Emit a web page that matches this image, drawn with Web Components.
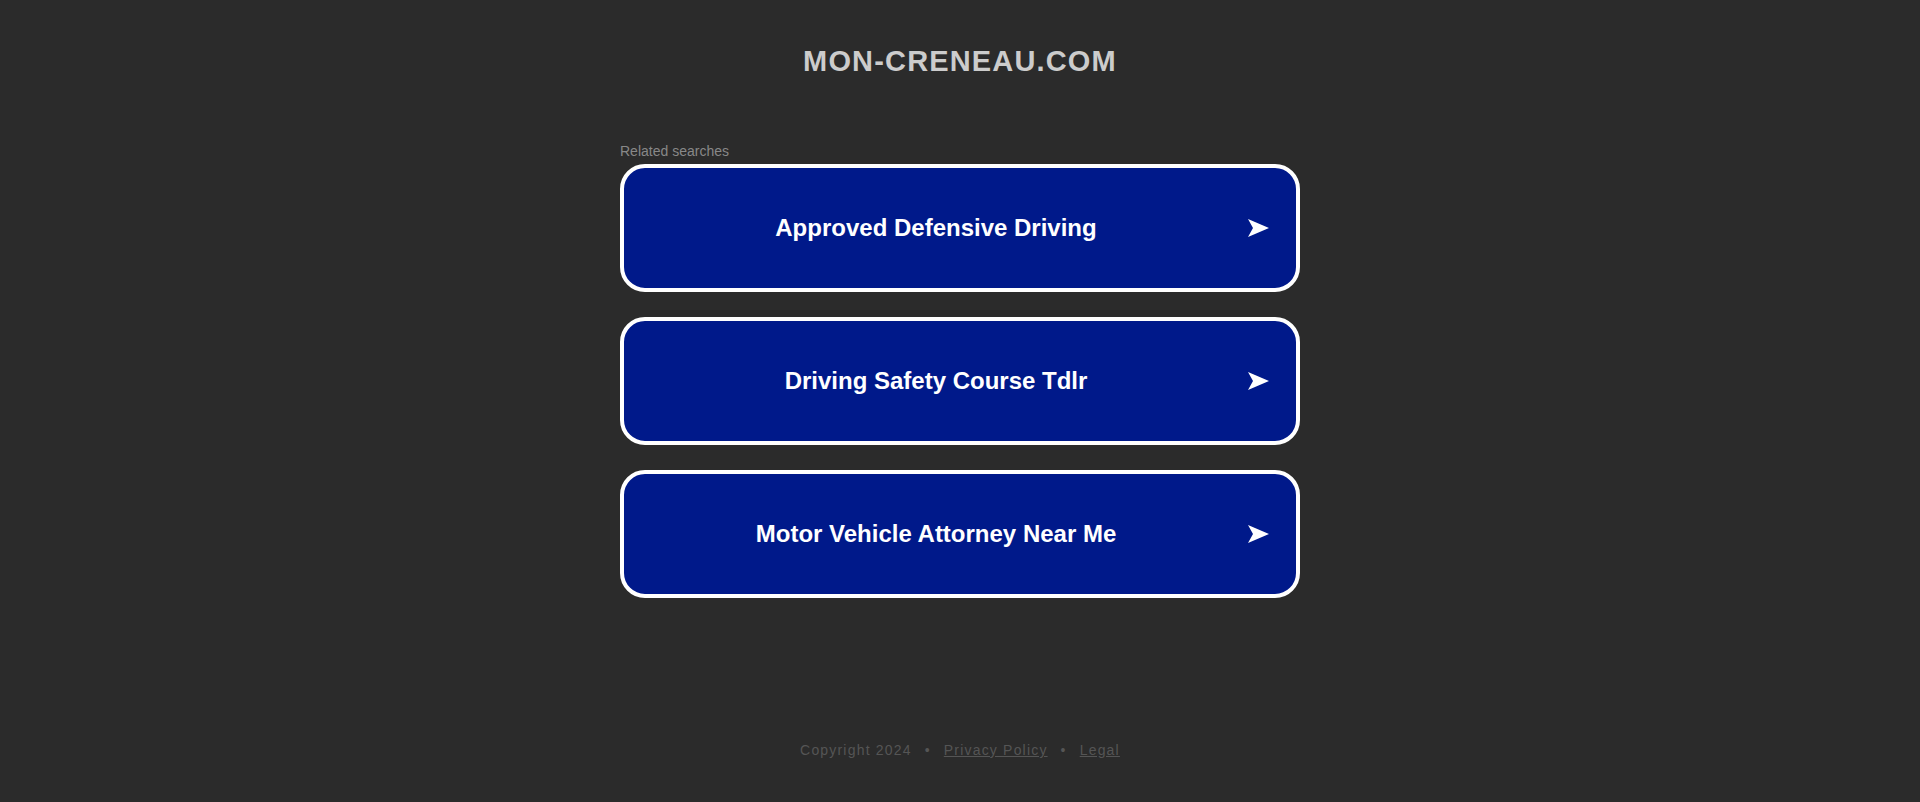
<!DOCTYPE html>
<html lang="en">
<head>
<meta charset="utf-8">
<title>mon-creneau.com</title>
<style>
body { margin: 0; background: #2b2b2b; font-family: Arial, "Liberation Sans", sans-serif; }
</style>
</head>
<body>
<parked-page>
  <site-title slot="header">MON-CRENEAU.COM</site-title>
  <related-searches label="Related searches">
    <search-link>Approved Defensive Driving</search-link>
    <search-link>Driving Safety Course Tdlr</search-link>
    <search-link>Motor Vehicle Attorney Near Me</search-link>
  </related-searches>
  <site-footer slot="footer"></site-footer>
</parked-page>
<script>
const define = (name, html) => customElements.define(name, class extends HTMLElement {
  constructor() {
    super();
    const t = document.createElement('template');
    t.innerHTML = html;
    this.attachShadow({ mode: 'open' }).append(t.content.cloneNode(true));
    const label = this.shadowRoot.querySelector('[data-label]');
    if (label) label.textContent = this.getAttribute('label');
  }
});

define('parked-page', `
<style>
  :host { display: flex; flex-direction: column; box-sizing: border-box; min-height: 100vh; padding: 40px 16px; }
  main { width: 100%; max-width: 680px; margin: 60px auto 0; }
  footer { margin-top: auto; }
</style>
<header><slot name="header"></slot></header>
<main><slot></slot></main>
<footer><slot name="footer"></slot></footer>`);

define('site-title', `
<style>
  :host { display: block; text-align: center; }
  h1 { margin: 0; font-size: 29px; line-height: 42px; letter-spacing: 0.04em; color: #ccc; }
</style>
<h1><slot></slot></h1>`);

define('related-searches', `
<style>
  :host { display: block; }
  h2 { margin: 0 0 4px; font-size: 14px; line-height: 18px; font-weight: 400; color: #888; }
  nav { display: grid; gap: 25px; }
</style>
<h2 data-label></h2>
<nav><slot></slot></nav>`);

define('search-link', `
<style>
  :host { display: block; }
  a { display: flex; align-items: center; box-sizing: border-box; min-height: 128px; padding: 0 26px 0 10px;
      border: 4px solid #fff; border-radius: 25px; background: #00198a; color: #fff; text-decoration: none;
      font-size: 24px; line-height: 30px; font-weight: 700; text-align: center; }
  span { flex: 1; padding-right: 10px; }
  svg { width: 22px; height: 20px; }
</style>
<a href="#"><span><slot></slot></span><svg viewBox="0 0 22 20" aria-hidden="true"><path fill="#fff" d="M0 1 21 10 0 19 5 10Z"/></svg></a>`);

define('site-footer', `
<style>
  :host { display: flex; justify-content: center; gap: 13px; font-size: 14px; line-height: 24px; letter-spacing: 0.085em; color: #555; }
  a { color: inherit; }
</style>
<span>Copyright 2024</span><span>•</span><a href="#">Privacy Policy</a><span>•</span><a href="#">Legal</a>`);
</script>
</body>
</html>
